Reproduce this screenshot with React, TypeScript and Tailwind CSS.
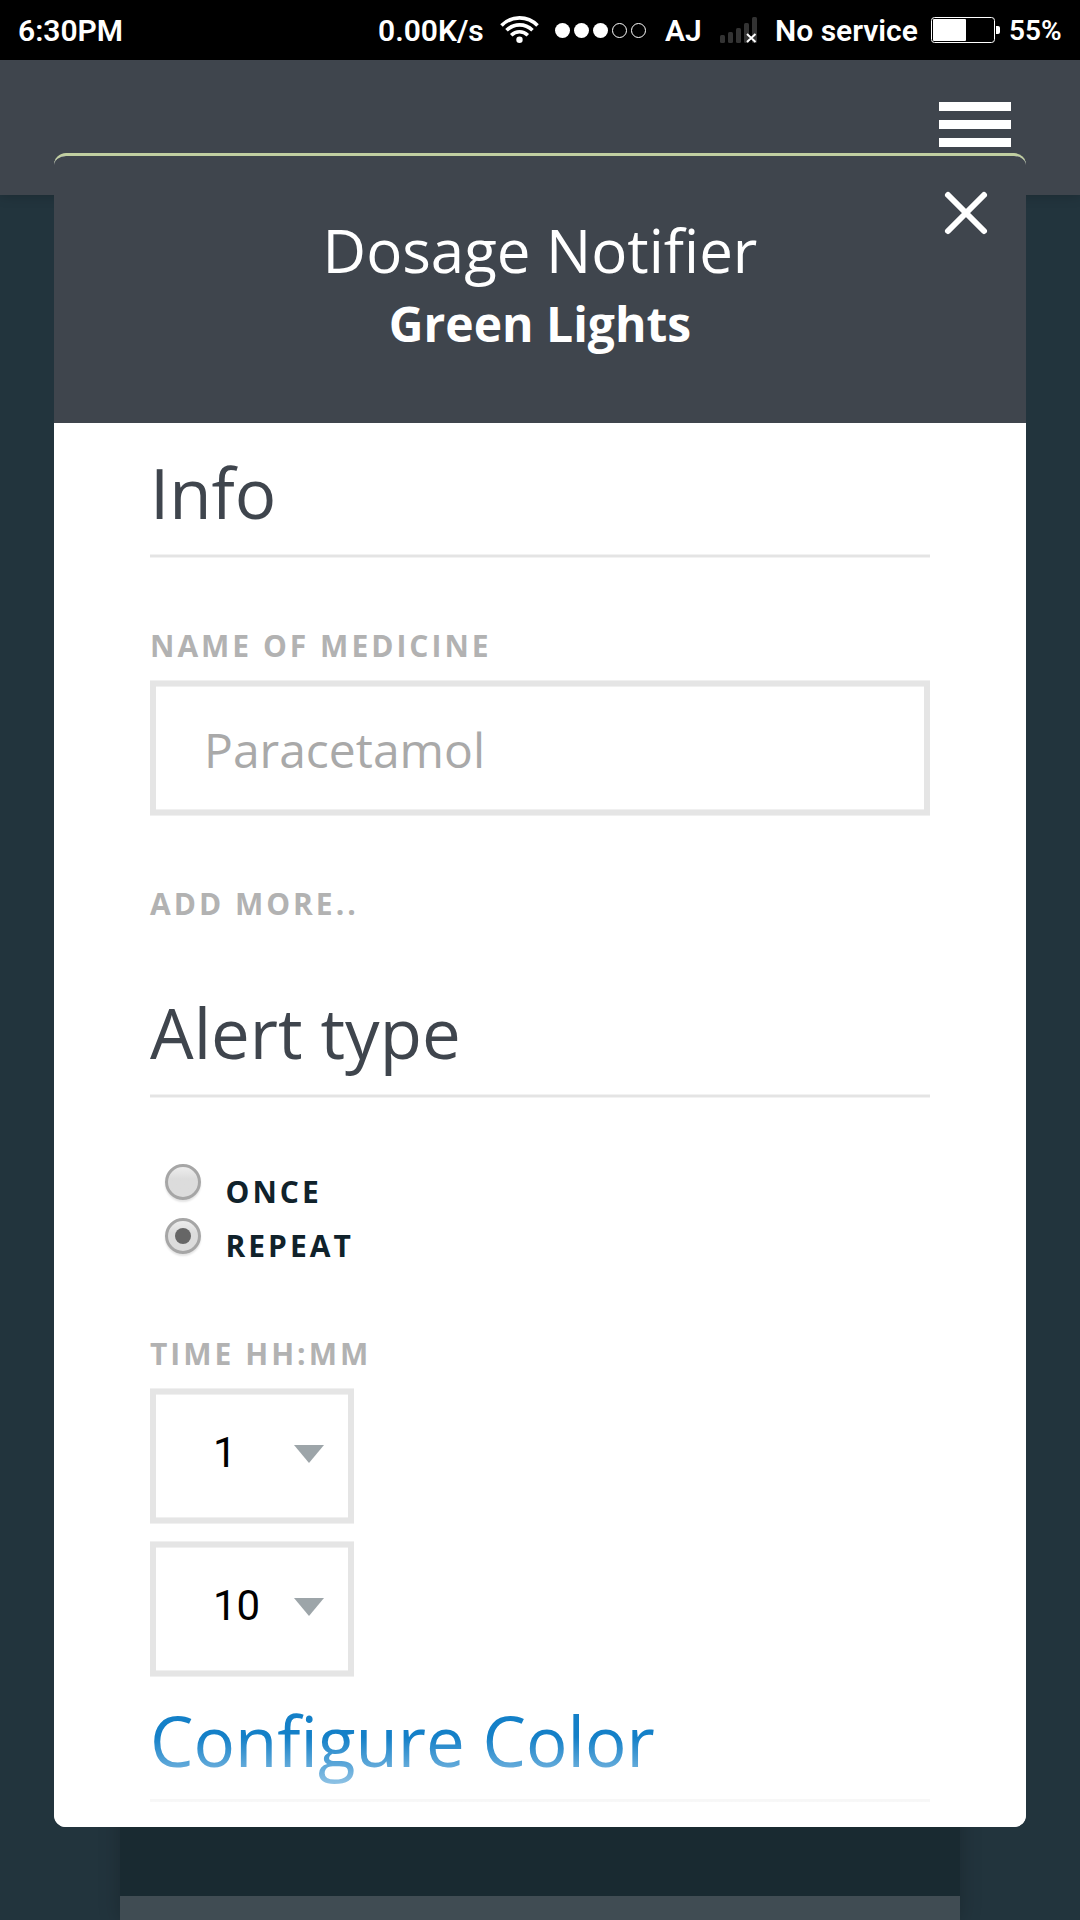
import React from "react";

function StatusBar() {
  return (
    <div className="flex h-[60px] items-center bg-black pl-[18px] font-['Roboto'] text-[30px] leading-[60px] font-semibold whitespace-nowrap text-white">
      <span className="w-[360px] pt-px">6:30PM</span>
      <span className="w-[122px] pt-px">0.00K/s</span>
      <svg className="w-[54px] shrink-0" height="60" viewBox="0 0 54 60" fill="none" stroke="white" strokeWidth="3.6">
        <path d="M1.500 25.500C11.500 15.300 27.500 15.300 37.500 25.500" />
        <path d="M6.500 30.300C14 23 25 23 32.500 30.300" />
        <path d="M11.200 35.200C16 30.500 23 30.500 27.800 35.200" />
        <circle cx="19.500" cy="39.800" r="3.200" fill="white" stroke="none" />
      </svg>
      <svg className="w-[111px] shrink-0" height="60" viewBox="0 0 111 60">
        <circle cx="8.500" cy="30.500" r="7.500" fill="white" />
        <circle cx="27.500" cy="30.500" r="7.500" fill="white" />
        <circle cx="46.500" cy="30.500" r="7.500" fill="white" />
        <circle cx="65.500" cy="30.500" r="7" fill="none" stroke="white" />
        <circle cx="84.500" cy="30.500" r="7" fill="none" stroke="white" />
      </svg>
      <span className="w-[55px] pt-px">AJ</span>
      <svg className="w-[55px] shrink-0" height="60" viewBox="0 0 55 60">
        <g fill="#333333">
          <rect x="0" y="35" width="5" height="8" rx="1.500" />
          <rect x="8" y="32" width="5" height="11" rx="1.500" />
          <rect x="16" y="28" width="5" height="15" rx="1.500" />
          <rect x="24" y="23" width="5" height="20" rx="1.500" />
          <rect x="32" y="17" width="5" height="26" rx="1.500" />
        </g>
        <path d="M27 34L35.500 42M35.500 34L27 42" stroke="white" strokeWidth="2" />
      </svg>
      <span className="w-[156px] pt-px">No service</span>
      <svg className="w-[78px] shrink-0" height="60" viewBox="0 0 78 60">
        <rect x="0.500" y="17.500" width="63" height="25" rx="3" fill="none" stroke="white" />
        <rect x="2" y="19" width="33" height="22" rx="1" fill="white" />
        <path d="M65 26h2q2 0 2 2v4q0 2-2 2h-2z" fill="white" />
      </svg>
      <span className="pt-px text-[28px]">55%</span>
    </div>
  );
}

function SectionHeading({ children }: { children: React.ReactNode }) {
  return (
    <>
      <h2 className="h-[108px] pt-px text-[69px] leading-[90px] text-[#3f454d]">{children}</h2>
      <div className="h-1 border-y border-[#f2f2f2] bg-[#e4e4e4]" />
    </>
  );
}

function Label({ children }: { children: React.ReactNode }) {
  return <div className="h-10 pt-px text-[30px] leading-10 font-bold tracking-[3px] text-[#b2b2b2]">{children}</div>;
}

const frame =
  "border-x-[6px] border-y-[5px] border-[#e5e5e5] shadow-[0_1px_0_#f0f0f0,0_-1px_0_#f0f0f0,inset_0_1px_0_#f0f0f0,inset_0_-1px_0_#f0f0f0]";

function Radio({ label, checked }: { label: string; checked?: boolean }) {
  return (
    <div className="flex h-[54px] items-start pl-[15px]">
      <div className="-mt-[7px] flex size-9 items-center justify-center rounded-full border-[3px] border-[#a6a6a6] bg-linear-to-b from-[#ededed] to-[#dcdcdc] to-40% shadow-[0_2px_2px_#0000001c]">
        {checked && <div className="size-4 rounded-full bg-[#666666]" />}
      </div>
      <span className="ml-[24.500px] pt-px text-[30px] leading-10 font-bold tracking-[3px] text-[#10222b]">{label}</span>
    </div>
  );
}

function Select({ value }: { value: string }) {
  return (
    <div className={`flex h-[134px] w-[204px] items-center justify-between pr-6 pl-[57px] ${frame}`}>
      <span className="-mt-[7px] font-['Roboto'] text-[42px] leading-[60px] text-black">{value}</span>
      <svg width="30" height="18" viewBox="0 0 30 18" className="mb-1">
        <path d="M0 0H30L15 18Z" fill="#9da5a9" />
      </svg>
    </div>
  );
}

function Modal() {
  return (
    <div className="absolute top-[153px] left-[54px] h-[1674px] w-[972px] overflow-hidden rounded-[12px] border-t-[3px] border-[#c1cfa1] bg-white">
      <header className="h-[267px] bg-[#3f454d] pt-[58px] text-center text-white">
        <h1 className="text-[60px] leading-[72px]">Dosage Notifier</h1>
        <p className="mt-[2px] text-[48px] leading-[72px] font-bold">Green Lights</p>
        <svg className="absolute top-[33px] right-[36px]" width="48" height="48" viewBox="0 0 48 48">
          <path d="M6 6L42 42M42 6L6 42" stroke="white" strokeWidth="6" strokeLinecap="round" />
        </svg>
      </header>
      <main className="px-24 pt-[23px]">
        <SectionHeading>Info</SectionHeading>
        <div className="mt-[67px]">
          <Label>NAME OF MEDICINE</Label>
          <div className={`mt-4 flex h-[134px] items-center pt-1 pl-[48px] text-[48px] leading-[66px] text-[#a9a9a9] ${frame}`}>
            Paracetamol
          </div>
        </div>
        <div className="mt-[68px] mb-[63px]">
          <Label>ADD MORE..</Label>
        </div>
        <SectionHeading>Alert type</SectionHeading>
        <div className="mt-[73px]">
          <Radio label="ONCE" />
          <Radio label="REPEAT" checked />
        </div>
        <div className="mt-[54px] flex flex-col">
          <Label>TIME HH:MM</Label>
          <div className="mt-4 flex flex-col gap-[19px]">
            <Select value="1" />
            <Select value="10" />
          </div>
        </div>
        <h2 className="mt-[18px] h-[105px] pt-px text-[69px] leading-[90px] text-[#1480c8]">Configure Color</h2>
        <div className="h-[3px] bg-[#e5e5e5]" />
      </main>
      <div className="absolute inset-x-0 bottom-0 h-[90px] bg-linear-to-b from-white/0 to-white" />
    </div>
  );
}

export default function App() {
  return (
    <div className="relative flex h-[1920px] w-[1080px] flex-col overflow-hidden bg-[#22343d] font-['Open_Sans',sans-serif]">
      <StatusBar />
      <nav className="flex h-[135px] justify-end bg-[#3f454d] pt-[42px] pr-[69px] shadow-[0_0_12px_#00000038]">
        <div className="flex w-[72px] flex-col gap-[9px]">
          <div className="h-[9px] bg-white" />
          <div className="h-[9px] bg-white" />
          <div className="h-[9px] bg-white" />
        </div>
      </nav>
      <section className="mx-[120px] mt-[60px] flex grow flex-col bg-[#192a31] shadow-[0_0_20px_#00000038]">
        <div className="mt-auto h-6 bg-[#404c53]" />
      </section>
      <Modal />
    </div>
  );
}
